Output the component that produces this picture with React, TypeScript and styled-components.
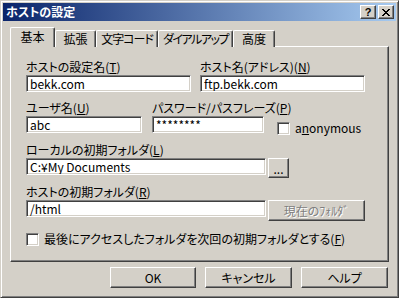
import React from "react";
import styled, { createGlobalStyle } from "styled-components";

const GlobalStyle = createGlobalStyle`
  html, body { margin: 0; padding: 0; background: #d4d0c8; }
  body {
    font-family: "Noto Sans CJK JP", "Noto Sans", sans-serif;
    font-size: 12px;
    font-feature-settings: "palt";
    color: #000;
  }
  * { box-sizing: border-box; }
`;

const Window = styled.div`
  width: 399px;
  height: 298px;
  background: #d4d0c8;
  border: 1px solid;
  border-color: #d4d0c8 #404040 #404040 #d4d0c8;
  box-shadow: inset 1px 1px #fff, inset -1px -1px #808080;
  padding: 2px;
  display: flex;
  flex-direction: column;
`;

const TitleBar = styled.div`
  height: 18px;
  background: linear-gradient(to right, #0a246a, #a6caf0);
  display: flex;
  align-items: center;
  padding: 0 2px 0 3px;
`;

const Title = styled.span`
  flex: 1;
  color: #fff;
  font-weight: bold;
  font-size: 12px;
  line-height: 18px;
`;

const CaptionButton = styled.div<{ $gap?: number }>`
  width: 16px;
  height: 14px;
  margin-left: ${(p) => p.$gap ?? 0}px;
  background: #d4d0c8;
  border: 1px solid;
  border-color: #fff #404040 #404040 #fff;
  box-shadow: inset -1px -1px #808080;
  display: flex;
  align-items: center;
  justify-content: center;
  font-family: "Liberation Sans", sans-serif;
  font-weight: bold;
  font-size: 11px;
  line-height: 12px;
`;

const Body = styled.div`
  flex: 1;
  display: flex;
  flex-direction: column;
  padding: 7px 7px 0 7px;
`;

const TabStrip = styled.div`
  display: flex;
  align-items: flex-end;
  height: 19px;
  position: relative;
  z-index: 1;
  margin-bottom: -1px;
`;

const Tab = styled.div<{ $w: number; $active?: boolean; $ls?: number }>`
  width: ${(p) => p.$w}px;
  flex: none;
  height: ${(p) => (p.$active ? 20 : 17)}px;
  background: #d4d0c8;
  border-top: 1px solid #fff;
  border-left: 1px solid #fff;
  border-right: 1px solid #404040;
  border-radius: 2px 2px 0 0;
  box-shadow: inset -1px 0 #808080;
  display: flex;
  justify-content: center;
  align-items: flex-start;
  padding-top: ${(p) => (p.$active ? 2 : 1)}px;
  line-height: 14px;
  font-size: 12px;
  white-space: nowrap;
  letter-spacing: ${(p) => p.$ls ?? 0}px;
  overflow: hidden;
`;

const Panel = styled.div`
  height: 216px;
  border: 1px solid;
  border-color: #fff #404040 #404040 #fff;
  box-shadow: inset -1px -1px #808080;
  padding: 13px 0 0 15px;
  display: flex;
  flex-direction: column;
`;

const Row = styled.div<{ $h: number }>`
  height: ${(p) => p.$h}px;
  display: flex;
  align-items: flex-start;
`;

const Field = styled.div<{ $w: number; $ml?: number }>`
  width: ${(p) => p.$w}px;
  margin-left: ${(p) => p.$ml ?? 0}px;
  display: flex;
  flex-direction: column;
`;

const Label = styled.div`
  height: 15px;
  line-height: 14px;
  white-space: nowrap;
`;

const Input = styled.div`
  height: 17px;
  background: #fff;
  border: 1px solid;
  border-color: #808080 #fff #fff #808080;
  box-shadow: inset 1px 1px #404040, inset -1px -1px #d4d0c8;
  padding: 0 3px;
  line-height: 15px;
  white-space: nowrap;
  overflow: hidden;
`;

const Check = styled.div`
  width: 13px;
  height: 13px;
  flex: none;
  background: #fff;
  border: 1px solid;
  border-color: #808080 #fff #fff #808080;
  box-shadow: inset 1px 1px #404040, inset -1px -1px #d4d0c8;
`;

const CheckLabel = styled.span`
  margin-left: 5px;
  line-height: 14px;
  white-space: nowrap;
`;

const Checkline = styled.div<{ $ml?: number; $mt?: number }>`
  display: flex;
  align-items: center;
  margin-left: ${(p) => p.$ml ?? 0}px;
  margin-top: ${(p) => p.$mt ?? 0}px;
`;

const Button = styled.div<{ $w: number; $h: number; $disabled?: boolean; $ml?: number; $mt?: number }>`
  width: ${(p) => p.$w}px;
  height: ${(p) => p.$h}px;
  flex: none;
  margin-left: ${(p) => p.$ml ?? 0}px;
  margin-top: ${(p) => p.$mt ?? 0}px;
  background: #d4d0c8;
  border: 1px solid;
  border-color: #fff #404040 #404040 #fff;
  box-shadow: inset -1px -1px #808080;
  display: flex;
  align-items: center;
  justify-content: center;
  white-space: nowrap;
  color: ${(p) => (p.$disabled ? "#808080" : "#000")};
  text-shadow: ${(p) => (p.$disabled ? "1px 1px #fff" : "none")};
  font-size: 12px;
`;

const Buttons = styled.div`
  display: flex;
  justify-content: flex-end;
  gap: 9px;
  padding: 5px 1px 0 0;
`;

const CloseIcon = () => (
  <svg width="8" height="7" viewBox="0 0 8 7" shapeRendering="crispEdges">
    <path
      d="M0 0h2v1h-2zM6 0h2v1h-2zM1 1h2v1h-2zM5 1h2v1h-2zM2 2h4v1h-4zM3 3h2v1h-2zM2 4h4v1h-4zM1 5h2v1h-2zM5 5h2v1h-2zM0 6h2v1h-2zM6 6h2v1h-2z"
      fill="#000"
    />
  </svg>
);

export default function App() {
  return (
    <>
      <GlobalStyle />
      <Window>
        <TitleBar>
          <Title>ホストの設定</Title>
          <CaptionButton>?</CaptionButton>
          <CaptionButton $gap={2}>
            <CloseIcon />
          </CaptionButton>
        </TitleBar>
        <Body>
          <TabStrip>
            <Tab $w={45} $active>基本</Tab>
            <Tab $w={41}>拡張</Tab>
            <Tab $w={62} $ls={-1}>文字コード</Tab>
            <Tab $w={75} $ls={-1.5}>ダイアルアップ</Tab>
            <Tab $w={42}>高度</Tab>
          </TabStrip>
          <Panel>
            <Row $h={41}>
              <Field $w={165}>
                <Label>ホストの設定名(<u>T</u>)</Label>
                <Input>bekk.com</Input>
              </Field>
              <Field $w={165} $ml={9}>
                <Label>ホスト名(アドレス)(<u>N</u>)</Label>
                <Input>ftp.bekk.com</Input>
              </Field>
            </Row>
            <Row $h={42}>
              <Field $w={116}>
                <Label>ユーザ名(<u>U</u>)</Label>
                <Input>abc</Input>
              </Field>
              <Field $w={112} $ml={10}>
                <Label>パスワード/パスフレーズ(<u>P</u>)</Label>
                <Input>********</Input>
              </Field>
              <Checkline $ml={13} $mt={20}>
                <Check />
                <CheckLabel>
                  a<u>n</u>onymous
                </CheckLabel>
              </Checkline>
            </Row>
            <Row $h={42}>
              <Field $w={240}>
                <Label>ローカルの初期フォルダ(<u>L</u>)</Label>
                <Input>C:¥My Documents</Input>
              </Field>
              <Button $w={21} $h={20} $ml={2} $mt={15}>
                ...
              </Button>
            </Row>
            <Row $h={47}>
              <Field $w={240}>
                <Label>ホストの初期フォルダ(<u>R</u>)</Label>
                <Input>/html</Input>
              </Field>
              <Button $w={97} $h={21} $ml={2} $mt={15} $disabled>
                現在のﾌｫﾙﾀﾞ
              </Button>
            </Row>
            <Row $h={14}>
              <Checkline>
                <Check />
                <CheckLabel>
                  最後にアクセスしたフォルダを次回の初期フォルダとする(<u>F</u>)
                </CheckLabel>
              </Checkline>
            </Row>
          </Panel>
          <Buttons>
            <Button $w={86} $h={21}>OK</Button>
            <Button $w={87} $h={21}>キャンセル</Button>
            <Button $w={87} $h={21}>ヘルプ</Button>
          </Buttons>
        </Body>
      </Window>
    </>
  );
}
